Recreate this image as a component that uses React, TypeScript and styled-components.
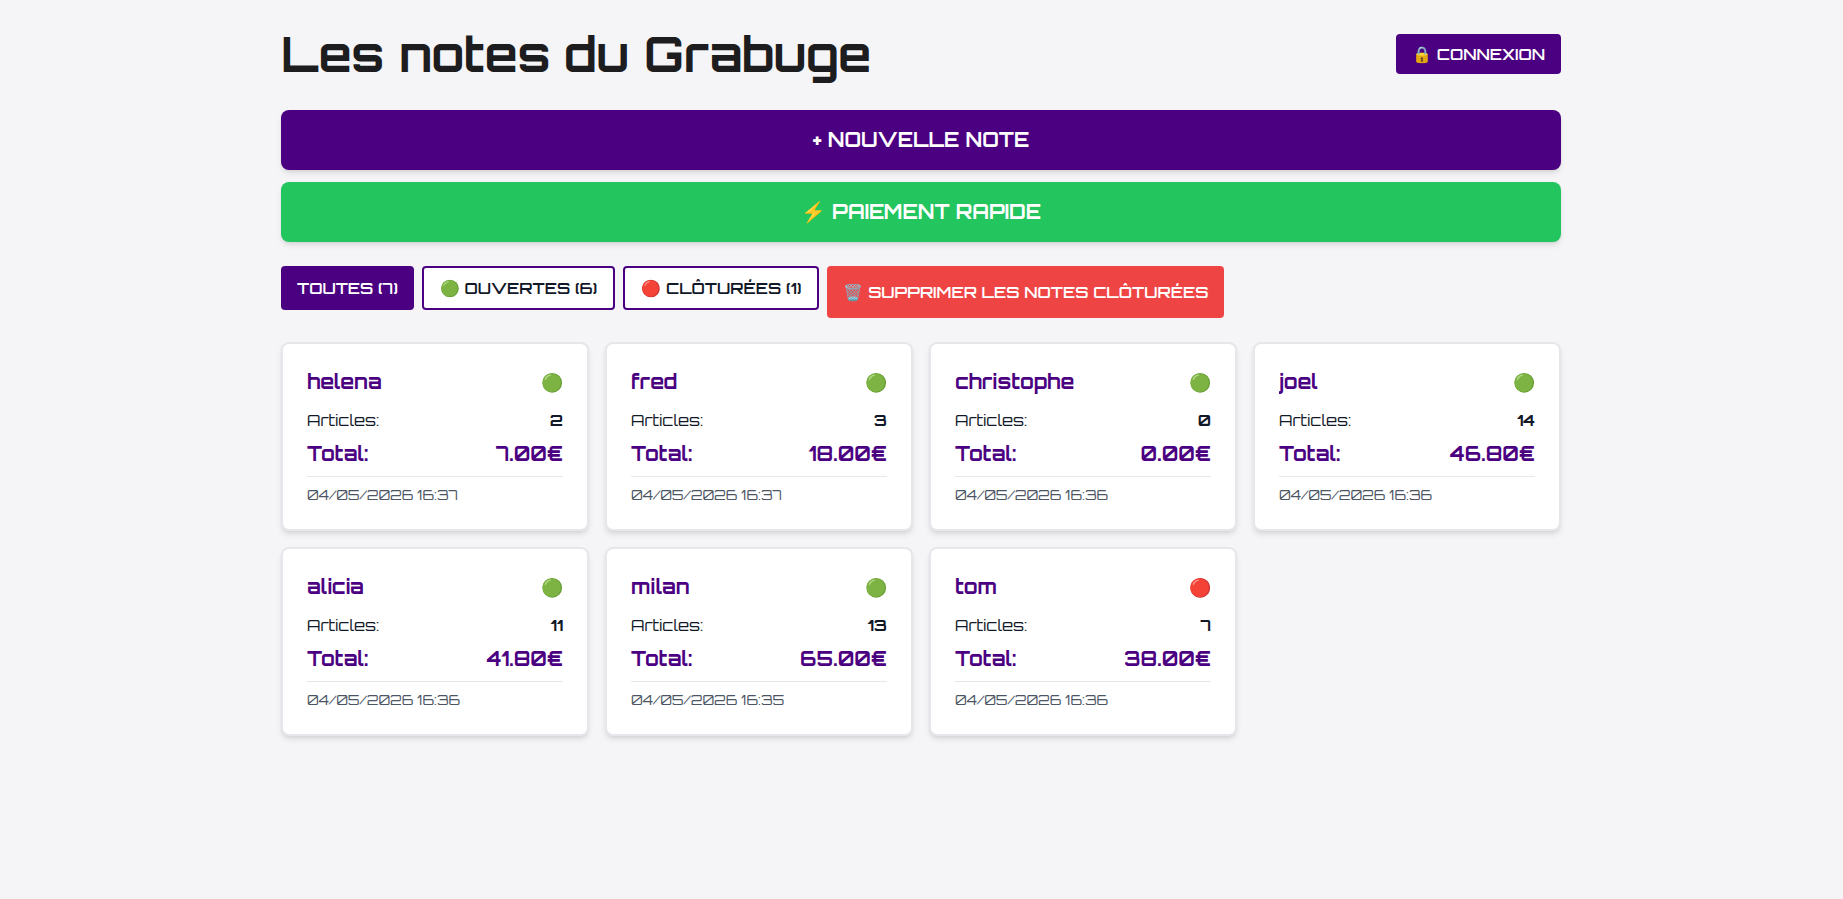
import React, { useState } from 'react';
import styled, { createGlobalStyle } from 'styled-components';

const GlobalStyle = createGlobalStyle`
  *, *::before, *::after { box-sizing: border-box; }
  body {
    margin: 0;
    background: #f5f5f7;
    color: #111827;
    font-family: Orbitron, sans-serif;
    font-size: 16px;
    line-height: 24px;
  }
  h1, h2, p, dl, dd, dt, ul { margin: 0; padding: 0; }
  button { font: inherit; color: inherit; cursor: pointer; }
`;

const Page = styled.main`
  max-width: 1313px;
  margin: 0 auto;
  padding: 30px 17px 16px 16px;
`;

const Header = styled.header`
  display: flex;
  align-items: center;
  justify-content: space-between;
  margin-bottom: 32px;
`;

const Title = styled.h1`
  color: #1d1d1f;
  font-size: 48px;
  line-height: 48px;
  font-weight: 700;
`;

const Button = styled.button`
  padding: 8px 16px;
  border: 0;
  border-radius: 4px;
  background: #4b0082;
  color: #ffffff;
  font-weight: 600;
  text-transform: uppercase;
`;

const DeleteButton = styled(Button)`
  padding: 14px 16px;
  background: #ef4444;
`;

const Actions = styled.div`
  display: flex;
  flex-direction: column;
  gap: 12px;
  margin-bottom: 24px;
`;

const ActionButton = styled(Button)<{ $color: string }>`
  padding: 16px;
  border-radius: 8px;
  background: ${({ $color }) => $color};
  font-size: 20px;
  line-height: 28px;
  font-weight: 700;
  box-shadow: 0 4px 6px -1px rgba(0, 0, 0, 0.1), 0 2px 4px -2px rgba(0, 0, 0, 0.1);
`;

const Toolbar = styled.div`
  display: flex;
  flex-wrap: wrap;
  align-items: flex-start;
  gap: 8px;
  margin-bottom: 24px;
`;

const Filters = styled.div`
  display: flex;
  flex-wrap: wrap;
  gap: 8px;
`;

const FilterButton = styled(Button)<{ $active: boolean }>`
  border: ${({ $active }) => ($active ? '0' : '2px solid #4b0082')};
  background: ${({ $active }) => ($active ? '#4b0082' : '#ffffff')};
  color: ${({ $active }) => ($active ? '#ffffff' : '#111827')};
`;

const Grid = styled.ul`
  display: grid;
  grid-template-columns: repeat(auto-fill, minmax(280px, 1fr));
  gap: 16px;
  list-style: none;
`;

const Card = styled.li`
  padding: 24px;
  border: 2px solid #e5e7eb;
  border-radius: 8px;
  background: #ffffff;
  box-shadow: 0 4px 6px -1px rgba(0, 0, 0, 0.1), 0 2px 4px -2px rgba(0, 0, 0, 0.1);
`;

const CardHeader = styled.div`
  display: flex;
  align-items: center;
  justify-content: space-between;
  margin-bottom: 12px;
`;

const Name = styled.h2`
  flex: 1;
  min-width: 0;
  overflow: hidden;
  text-overflow: ellipsis;
  white-space: nowrap;
  color: #4b0082;
  font-size: 20px;
  line-height: 28px;
  font-weight: 700;
`;

const Status = styled.span`
  font-size: 18px;
  line-height: 28px;
`;

const Details = styled.dl`
  display: grid;
  gap: 8px;
`;

const Row = styled.div<{ $total?: boolean }>`
  display: flex;
  justify-content: space-between;
  color: ${({ $total }) => ($total ? '#4b0082' : 'inherit')};
  font-size: ${({ $total }) => ($total ? 20 : 16)}px;
  line-height: ${({ $total }) => ($total ? 28 : 24)}px;
  font-weight: ${({ $total }) => ($total ? 700 : 400)};

  dd { font-weight: 700; }
`;

const DateLine = styled.p`
  margin-top: 8px;
  padding-top: 8px;
  border-top: 1px solid #e5e7eb;
  color: #4b5563;
  font-size: 14px;
  line-height: 20px;
`;

type Filter = 'all' | 'open' | 'closed';
type Note = { name: string; open: boolean; items: number; total: string; date: string };

const initialNotes: Note[] = [
  { name: 'helena', open: true, items: 2, total: '7.00', date: '04/05/2026 16:37' },
  { name: 'fred', open: true, items: 3, total: '18.00', date: '04/05/2026 16:37' },
  { name: 'christophe', open: true, items: 0, total: '0.00', date: '04/05/2026 16:36' },
  { name: 'joel', open: true, items: 14, total: '46.80', date: '04/05/2026 16:36' },
  { name: 'alicia', open: true, items: 11, total: '41.80', date: '04/05/2026 16:36' },
  { name: 'milan', open: true, items: 13, total: '65.00', date: '04/05/2026 16:35' },
  { name: 'tom', open: false, items: 7, total: '38.00', date: '04/05/2026 16:36' },
];

export default function App() {
  const [notes, setNotes] = useState(initialNotes);
  const [filter, setFilter] = useState<Filter>('all');

  const openCount = notes.filter((note) => note.open).length;
  const filters: { id: Filter; label: string }[] = [
    { id: 'all', label: `Toutes (${notes.length})` },
    { id: 'open', label: `🟢 Ouvertes (${openCount})` },
    { id: 'closed', label: `🔴 Clôturées (${notes.length - openCount})` },
  ];
  const visible = notes.filter((note) => filter === 'all' || note.open === (filter === 'open'));

  return (
    <>
      <GlobalStyle />
      <Page>
        <Header>
          <Title>Les notes du Grabuge</Title>
          <Button type="button">🔒 Connexion</Button>
        </Header>
        <Actions>
          <ActionButton type="button" $color="#4b0082">+ Nouvelle note</ActionButton>
          <ActionButton type="button" $color="#22c55e">⚡ Paiement rapide</ActionButton>
        </Actions>
        <Toolbar>
          <Filters>
            {filters.map(({ id, label }) => (
              <FilterButton
                key={id}
                type="button"
                aria-pressed={filter === id}
                $active={filter === id}
                onClick={() => setFilter(id)}
              >
                {label}
              </FilterButton>
            ))}
          </Filters>
          <DeleteButton type="button" onClick={() => setNotes(notes.filter((note) => note.open))}>
            🗑️ Supprimer les notes clôturées
          </DeleteButton>
        </Toolbar>
        <Grid>
          {visible.map((note) => (
            <Card key={note.name}>
              <CardHeader>
                <Name>{note.name}</Name>
                <Status role="img" aria-label={note.open ? 'Ouverte' : 'Clôturée'}>
                  {note.open ? '🟢' : '🔴'}
                </Status>
              </CardHeader>
              <Details>
                <Row>
                  <dt>Articles:</dt>
                  <dd>{note.items}</dd>
                </Row>
                <Row $total>
                  <dt>Total:</dt>
                  <dd>{note.total}€</dd>
                </Row>
              </Details>
              <DateLine>{note.date}</DateLine>
            </Card>
          ))}
        </Grid>
      </Page>
    </>
  );
}
